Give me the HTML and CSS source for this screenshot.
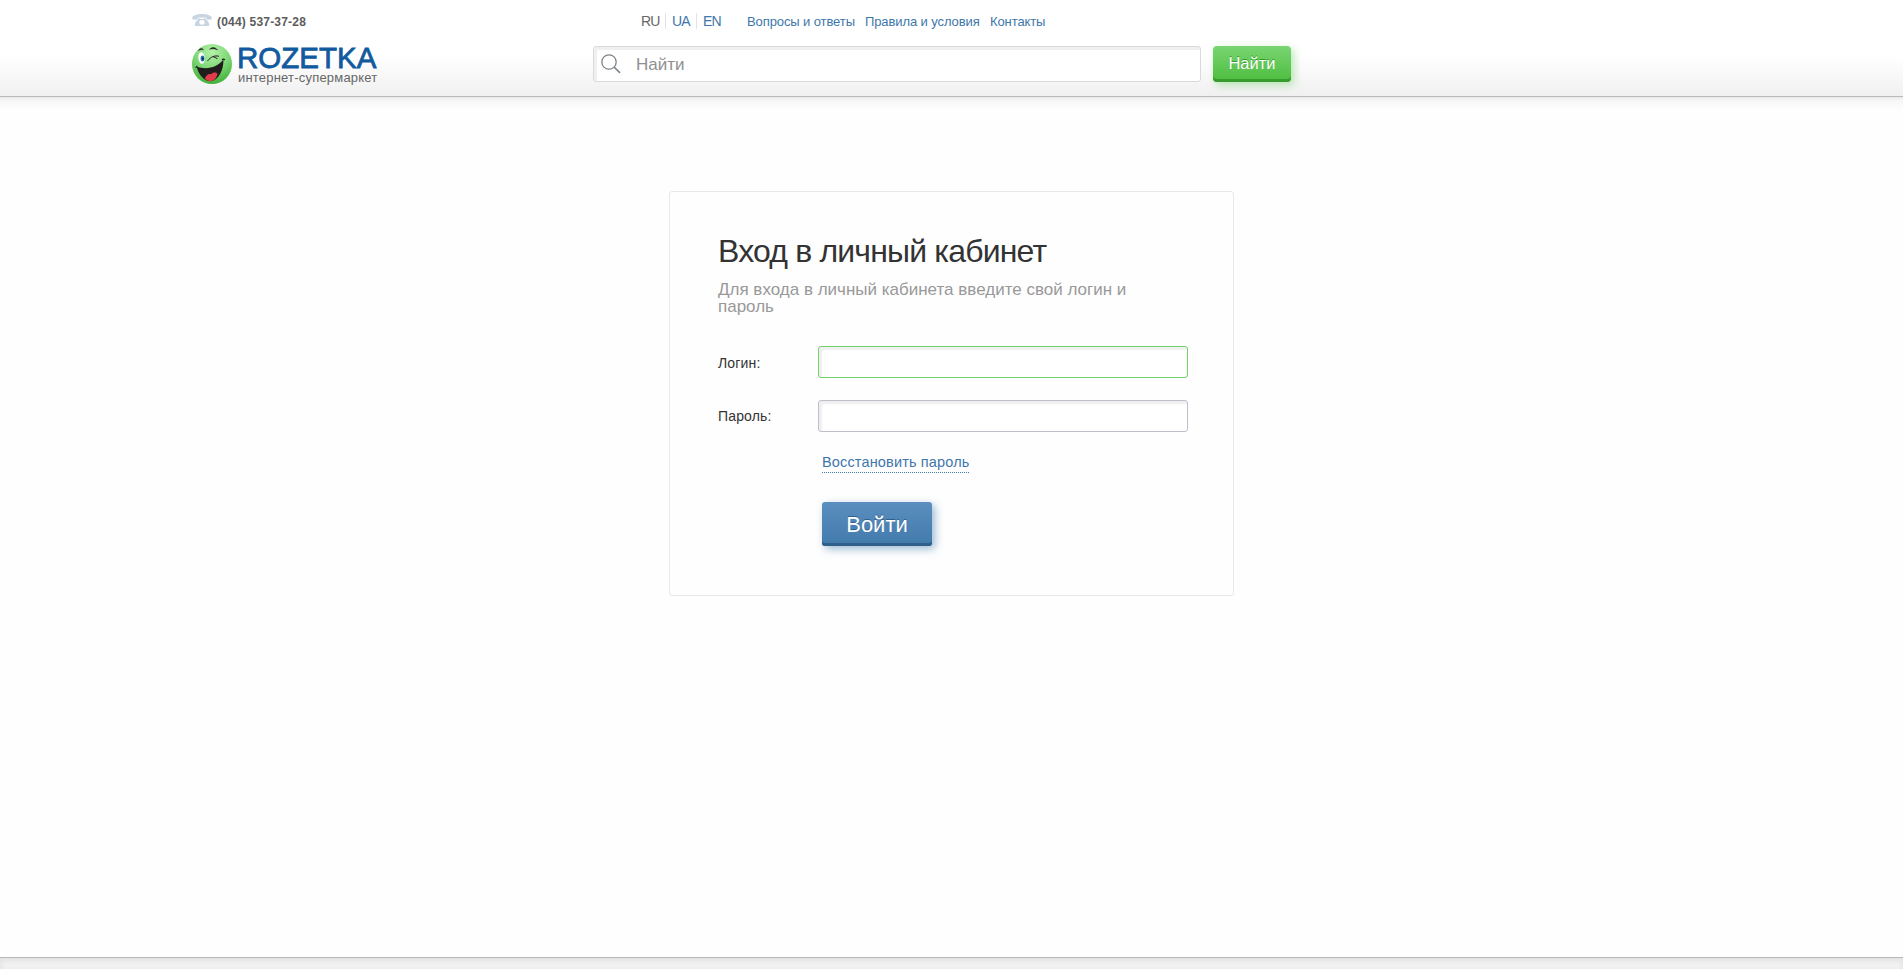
FILE: index.html
```html
<!DOCTYPE html>
<html lang="ru">
<head>
<meta charset="utf-8">
<title>Вход в личный кабинет</title>
<link rel="stylesheet" href="styles.css">
</head>
<body>
<header class="header">
  <div class="header-inner">
    <div class="brand">
      <div class="phone">
        <svg class="phone-icon" width="20" height="12" viewBox="0 0 20 12"><path fill="#c9d4e1" fill-rule="evenodd" d="M0 3.600C1.200 1.300 5 0 10 0s8.800 1.300 10 3.600l-.7 2-4.400.1-.9-2.200H6l-.9 2.200-4.400-.1zM6.500 4.300H8v.7h4v-.7h1.500l.8 1.700c2.200 1.300 2.900 3 2.900 6H2.800c0-3 .7-4.700 2.900-6zM10 5.900a2.700 2.400 0 1 0 0 4.800 2.700 2.400 0 0 0 0-4.800z"/></svg>
        <span class="phone-number">(044) 537-37-28</span>
      </div>
      <a class="logo">
        <svg class="smile" width="40" height="40" viewBox="0 0 40 40">
          <defs><radialGradient id="face" cx=".5" cy=".2" r=".85"><stop offset="0" stop-color="#b4f2a9"/><stop offset=".5" stop-color="#7fd877"/><stop offset="1" stop-color="#37ac2e"/></radialGradient></defs>
          <circle cx="20" cy="20" r="20" fill="url(#face)"/>
          <path d="M4.500 22.500C14 26 25 24 31.500 15.500C31.500 26 27 36 19 37.300C11 37 6.500 30 4.500 22.500z" fill="#211d1d"/>
          <path d="M12.800 34.500c1.500-3.500 4.200-5.500 6.200-4.200 2-2.300 5-2.300 6.500-.3-1 4-3.500 7-6.500 7.300-2.500 0-4.600-1-6.200-2.800z" fill="#e23b4a"/>
          <path d="M3.800 24c.2-1 .8-1.700 1.700-2M30 15.800c1.100-.9 2-.9 2.700.3" fill="none" stroke="#211d1d" stroke-width="1.200"/>
          <ellipse cx="9.600" cy="14" rx="3.200" ry="5.800" fill="#fff" transform="rotate(-5 9.600 14)"/>
          <ellipse cx="10.500" cy="14.500" rx="1.900" ry="3" fill="#2875b5"/><ellipse cx="10.800" cy="14.700" rx=".8" ry="1.400" fill="#132337"/>
          <path d="M6.500 6.500C8 4 10.500 4 11.500 6C10 5.300 8.500 5.500 6.500 6.500zM17.500 5.300C20 2.600 23.500 3 25.500 6C22.500 4.500 20 4.500 17.500 5.300z" fill="#211d1d" stroke="#211d1d" stroke-width=".4"/>
          <path d="M15.500 17C19 12.500 23 11.200 27 12.300M21 12.500l4.500 2.200" fill="none" stroke="#211d1d" stroke-width="1"/>
        </svg>
        <span class="logo-text"><span class="logo-name">ROZETKA</span><span class="logo-sub">интернет-супермаркет</span></span>
      </a>
    </div>
    <div class="tools">
      <nav class="top-nav">
        <span class="lang lang-active">RU</span><a class="lang">UA</a><a class="lang">EN</a>
        <a class="nav-link nav-faq">Вопросы и ответы</a><a class="nav-link nav-rules">Правила и условия</a><a class="nav-link nav-contacts">Контакты</a>
      </nav>
      <div class="search">
        <div class="search-field">
          <svg width="20" height="20" viewBox="0 0 20 20" fill="none" stroke="#7d8388"><circle cx="8" cy="8" r="7.200" stroke-width="1.300"/><path d="M13 13l6 5.800" stroke-width="1.600"/></svg>
          <span class="search-placeholder">Найти</span>
        </div>
        <button class="search-button"><span>Найти</span></button>
      </div>
    </div>
  </div>
</header>
<main class="content">
  <section class="card">
    <h1 class="title"><span>Вход в личный кабинет</span></h1>
    <p class="hint">Для входа в личный кабинета введите свой логин и<br>пароль</p>
    <form class="form">
      <label class="label" for="login">Логин:</label><input class="input input-focus" id="login" type="text">
      <label class="label label-password" for="password">Пароль:</label><input class="input" id="password" type="password">
    </form>
    <div class="actions">
      <a class="restore">Восстановить пароль</a>
      <button class="submit"><span>Войти</span></button>
    </div>
  </section>
</main>
<footer class="footer"></footer>
</body>
</html>
```
FILE: styles.css
```css
* { box-sizing: border-box; }
body { margin: 0; height: 969px; overflow: hidden; display: flex; flex-direction: column; background: #fefefe; font-family: "Liberation Sans", Arial, sans-serif; color: #333; }
a { color: #3e77aa; text-decoration: none; }
button { font-family: inherit; border: 0; padding: 0; color: #fff; }
span { white-space: nowrap; }

.header { flex: none; height: 97px; border-bottom: 1px solid #bababa; background: linear-gradient(#fff 0, #fff 56px, #f0f0f0 96px); }
.header-inner { display: flex; padding-left: 192px; }
.brand { width: 401px; padding-top: 14px; }
.phone { display: flex; gap: 5px; height: 16px; line-height: 17px; }
.phone-icon { flex: none; }
.phone-number { font-size: 12px; font-weight: bold; color: #5c5c5c; letter-spacing: .2px; }
.logo { display: flex; gap: 5px; margin-top: 14px; }
.logo-text { display: flex; flex-direction: column; }
.logo-name { font-size: 29.5px; line-height: 27px; color: #125a9e; letter-spacing: 0; -webkit-text-stroke: .8px #125a9e; }
.logo-sub { padding-left: 1px; font-size: 13px; line-height: 14px; color: #666; letter-spacing: .2px; }

.tools { width: 700px; }
.top-nav { display: flex; height: 46px; padding: 13px 0 17px 42px; }
.lang { width: 31px; padding-left: 6px; height: 16px; line-height: 17px; font-size: 14px; letter-spacing: -.8px; border-right: 1px solid #e3e3e3; }
.lang:nth-child(3) { border: 0; }
.lang-active { color: #666; }
.nav-link { line-height: 17px; font-size: 13px; letter-spacing: -.1px; white-space: nowrap; }
.nav-faq { margin-left: 19px; width: 118px; }
.nav-rules { width: 125px; }
.search { display: flex; gap: 12px; }
.search-field { display: flex; width: 608px; height: 36px; padding: 7px 0 0 7px; gap: 15px; background: #fff; border: 1px solid #dadada; border-radius: 3px; box-shadow: inset 3px 3px 0 #f0f0f0; line-height: 21px; }
.search-placeholder { font-size: 17px; color: #8f8f8f; }
.search-button { width: 78px; height: 36px; padding-bottom: 2px; font-size: 16.5px; line-height: 20px; border-radius: 4px; background: linear-gradient(#79d572, #50bf42 33px); box-shadow: inset 0 -3px 0 #379b2d, 3px 3px 8px rgba(80,200,70,.4); text-shadow: 0 -1px 0 #379b2d; }

.content { flex: 1; padding: 94px 0 0 669px; background: linear-gradient(#e9e9e9 0, #f6f6f6 3px, #fefefe 13px); }
.card { width: 565px; height: 405px; padding: 39px 44px 0 48px; border: 1px solid #e8e8e8; border-radius: 3px; }
.title { margin: 0; font-size: 32px; line-height: 40px; font-weight: normal; letter-spacing: -.82px; }
.hint { margin: 10px 0 0; font-size: 17px; line-height: 17px; color: #999; white-space: nowrap; }
.form { display: grid; grid-template-columns: 100px 370px; row-gap: 22px; margin-top: 31px; }
.label { font-size: 14px; line-height: 16px; padding-top: 9px; letter-spacing: .15px; }
.label-password { padding-top: 8px; }
.input { width: 370px; height: 32px; border: 1px solid #bfbeca; border-radius: 3px; outline: 0; background: #fff; box-shadow: inset 3px 3px 2px #efeff1; }
.input-focus { border-color: #72d267; }
.actions { display: flex; flex-direction: column; align-items: flex-start; padding: 22px 0 0 104px; }
.restore { font-size: 14.5px; line-height: 17px; height: 19px; border-bottom: 1px dotted #3e77aa; letter-spacing: .15px; white-space: nowrap; }
.submit { width: 110px; height: 44px; margin-top: 29px; padding: 0; font-size: 22px; line-height: 32px; border-radius: 3px; background: linear-gradient(#5b8fc0, #427bac 41px); box-shadow: inset 0 -3px 0 #315f8c, 3px 3px 8px rgba(62,119,170,.5); text-shadow: 0 -1px 0 #315f8c; }
.submit span { display: block; padding-top: 2px; }

.footer { flex: none; height: 12px; border-top: 1px solid #b8b8b8; background: #f3f3f3; box-shadow: inset 0 2px 6px #ddd; }
```
